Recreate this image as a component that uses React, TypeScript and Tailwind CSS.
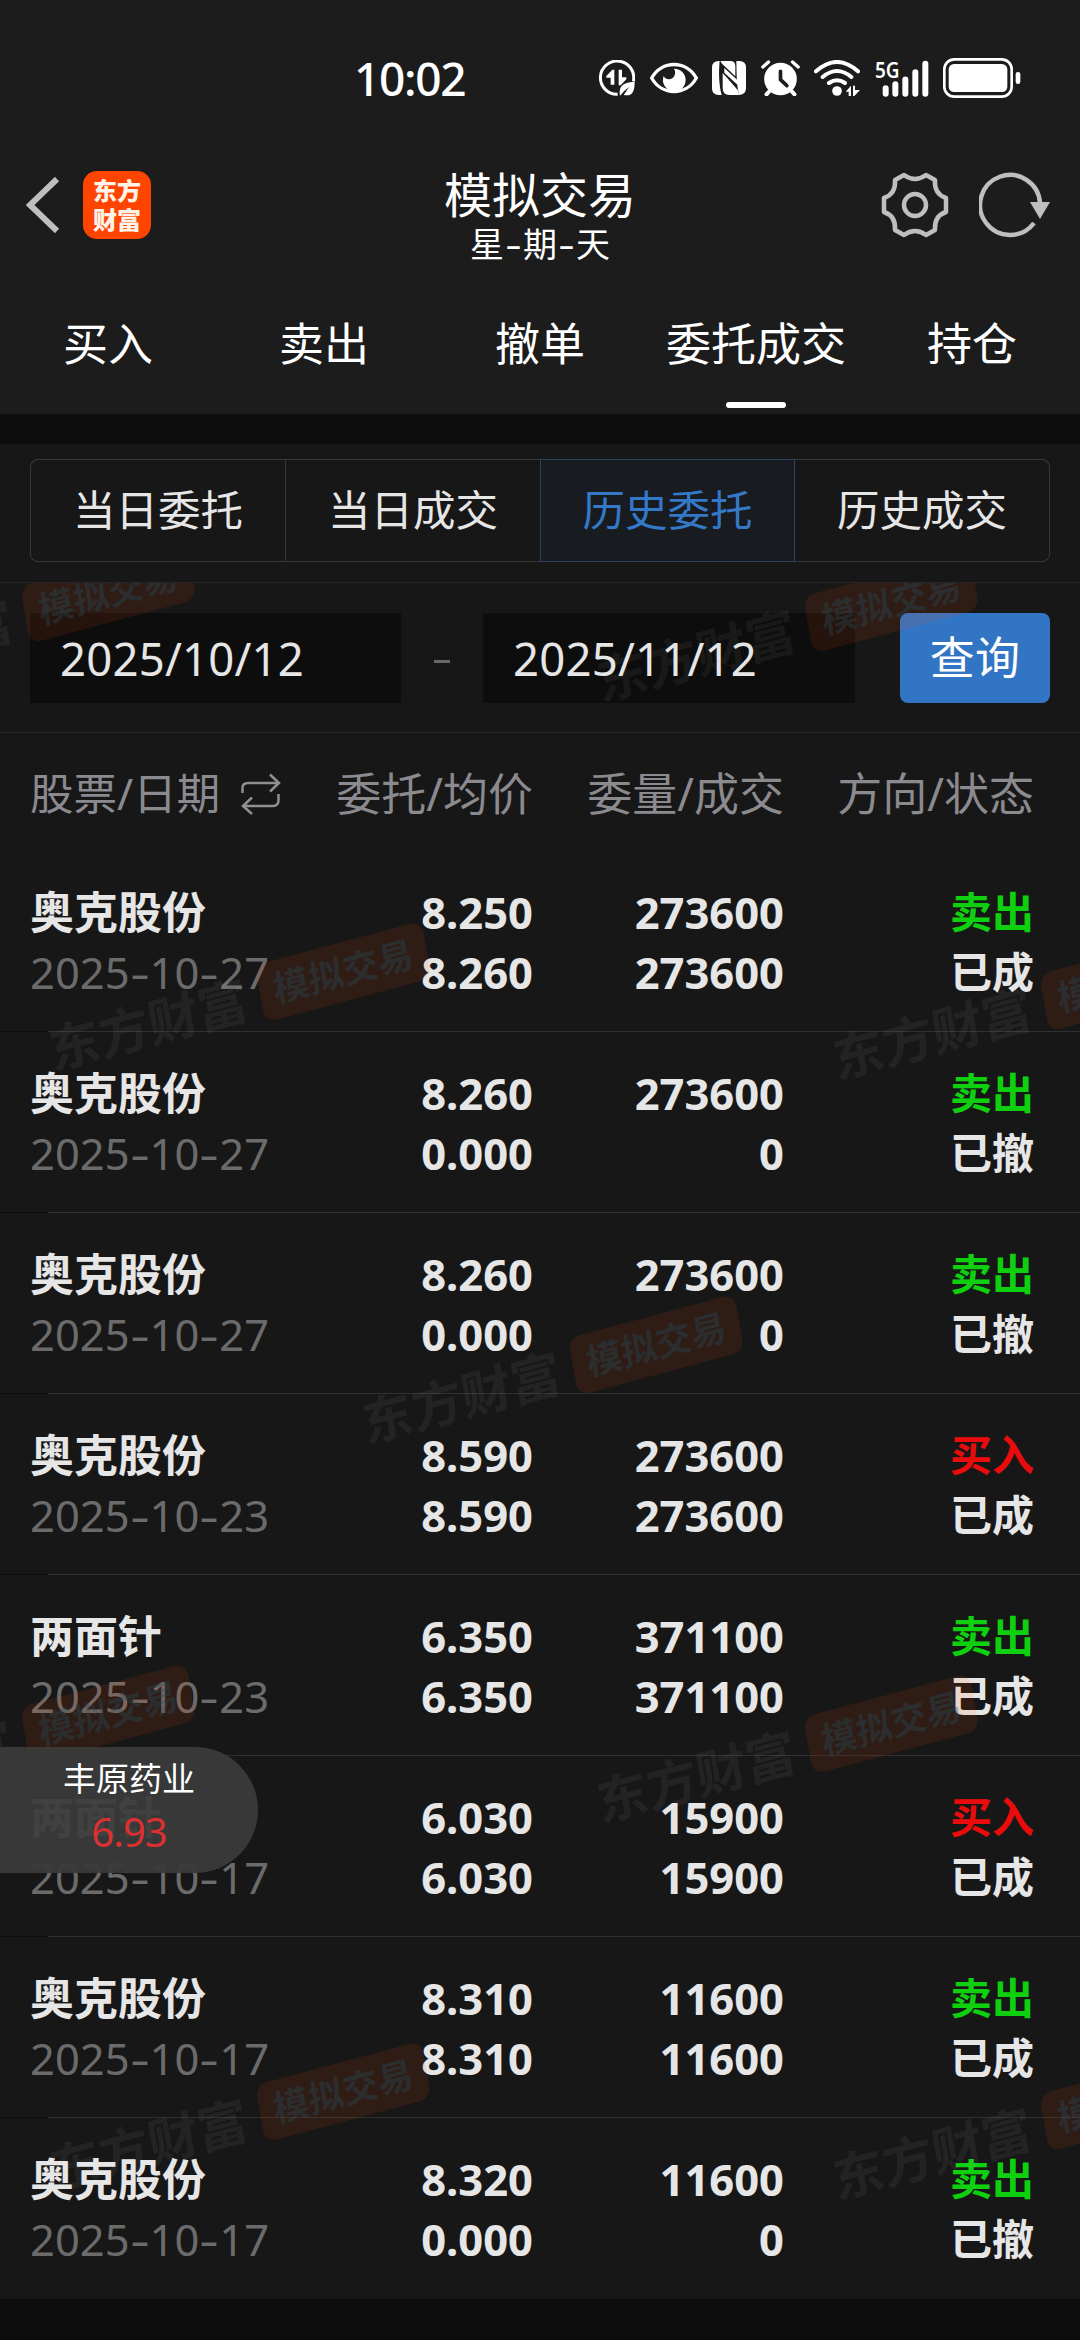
import { Fragment } from "react";
import clsx from "clsx";

type Order = {
    name: string;
    date: string;
    price: string;
    avgPrice: string;
    amount: string;
    filled: string;
    side: "买入" | "卖出";
    status: string;
};

const tabs = ["买入", "卖出", "撤单", "委托成交", "持仓"];
const segments = ["当日委托", "当日成交", "历史委托", "历史成交"];

const orders: Order[] = [
    { name: "奥克股份", date: "2025-10-27", price: "8.250", avgPrice: "8.260", amount: "273600", filled: "273600", side: "卖出", status: "已成" },
    { name: "奥克股份", date: "2025-10-27", price: "8.260", avgPrice: "0.000", amount: "273600", filled: "0", side: "卖出", status: "已撤" },
    { name: "奥克股份", date: "2025-10-27", price: "8.260", avgPrice: "0.000", amount: "273600", filled: "0", side: "卖出", status: "已撤" },
    { name: "奥克股份", date: "2025-10-23", price: "8.590", avgPrice: "8.590", amount: "273600", filled: "273600", side: "买入", status: "已成" },
    { name: "两面针", date: "2025-10-23", price: "6.350", avgPrice: "6.350", amount: "371100", filled: "371100", side: "卖出", status: "已成" },
    { name: "两面针", date: "2025-10-17", price: "6.030", avgPrice: "6.030", amount: "15900", filled: "15900", side: "买入", status: "已成" },
    { name: "奥克股份", date: "2025-10-17", price: "8.310", avgPrice: "8.310", amount: "11600", filled: "11600", side: "卖出", status: "已成" },
    { name: "奥克股份", date: "2025-10-17", price: "8.320", avgPrice: "0.000", amount: "11600", filled: "0", side: "卖出", status: "已撤" },
];

// centres of the watermark stamps, relative to the content area
const stamps = [
    "left-[3px] top-[38px]",
    "left-[786px] top-[48px]",
    "left-[238px] top-[417px]",
    "left-[1022px] top-[426px]",
    "left-[551px] top-[790px]",
    "left-[3px] top-[1159px]",
    "left-[786px] top-[1169px]",
    "left-[238px] top-[1537px]",
    "left-[1022px] top-[1546px]",
];

const StatusBar = () => (
    <div className="flex h-[156px] items-center justify-between pl-[354px] pr-[59px]">
        <span className="text-[46px] font-medium leading-none tracking-[-1.3px]">10:02</span>
        <div className="flex items-center gap-[14.5px]">
            <svg className="h-9 w-[37px]" viewBox="57 60 111 108" fill="none">
                <path d="M163 124A50 50 0 1 0 116 163" stroke="#fff" strokeWidth="9" />
                <path d="M106 134V89h-6L82 108v5h13v21zM119 89h10v23h13v6l-17 18h-6z" fill="#fff" />
                <path d="M167 125c-20 1-38 6-43 20-3 9-2 14-1 22l12-13 15-13-10 16-6 8c26 5 33-10 33-40z" fill="#fff" />
            </svg>
            <svg className="h-8 w-12" viewBox="211 66 144 96" fill="none">
                <path d="M216 114C246 60 320 60 350 114C320 168 246 168 216 114Z" stroke="#fff" strokeWidth="10" strokeLinejoin="round" />
                <path d="M283 86a34 34 0 1 1-31 22c4 8 12 11 20 9 14-4 18-20 11-31z" fill="#fff" />
            </svg>
            <svg className="size-[34px]" viewBox="399 63 102 102">
                <path d="M419 63h3c-3 30-3 70 6 102h-9q-20 0-20-20V83q0-20 20-20z" fill="#fff" />
                <path d="M424 63h28c14 0 17 6 17 18v28l-40-38zM481 165h-28c-17 0-22-8-22-24v-43l45 52z" fill="#fff" />
                <path d="M431 88l40 38v10l-40-37z" fill="#1c1c1c" />
                <path d="M472 63h9q20 0 20 20v62q0 18-20 20c-9-26-8-70-9-102z" fill="#fff" />
                <path d="M436 84l40 37v14l-40-37z" fill="#fff" />
            </svg>
            <svg className="h-9 w-[39px]" viewBox="543 60 116 108" fill="none" stroke="#fff" strokeLinecap="round">
                <circle cx="601" cy="117" r="49" fill="#fff" stroke="none" />
                <path d="M548 81l17-15M654 81l-17-15" strokeWidth="10" />
                <path d="M568 153l-9 10M634 153l9 10" strokeWidth="12" />
                <path d="M601 94v25l19 18" stroke="#1c1c1c" strokeWidth="11" strokeLinejoin="round" />
            </svg>
            <svg className="h-9 w-[46px]" viewBox="703 60 138 108" fill="none" stroke="#fff" strokeLinecap="round" strokeWidth="12">
                <path d="M709 94q63-56 126 0M729 111q43-36 86 0M748 129q24-17 48 0" />
                <circle cx="772" cy="153" r="14.500" fill="#fff" stroke="none" />
                <path d="M798 155l16-18v31h-7v-13zM820 137h6v13h15l-17 18h-4z" fill="#fff" stroke="none" />
            </svg>
            <svg className="h-[37px] w-[54px] overflow-visible" viewBox="886 58 162 110">
                <path d="M918 142v17M947 130v29M977 116v43M1007 94v65M1037 69v90" stroke="#fff" strokeWidth="18" strokeLinecap="round" />
                <text x="886" y="111" fill="#fff" fontFamily="Noto Sans" fontWeight="600" fontSize="66" textLength="74" lengthAdjust="spacingAndGlyphs">
                    5G
                </text>
            </svg>
            <svg className="h-10 w-[78px]" viewBox="1090 54 234 120" fill="none">
                <rect x="1094" y="58" width="202" height="112" rx="30" stroke="#fff" strokeWidth="8" />
                <rect x="1107" y="72" width="176" height="84" rx="16" fill="#fff" />
                <rect x="1308" y="96" width="14" height="36" rx="7" fill="#fff" />
            </svg>
        </div>
    </div>
);

const TitleBar = () => (
    <div className="grid h-[108px] grid-cols-[1fr_auto_1fr]">
        <div className="flex h-[98px] items-center pl-[26px]">
            <svg className="h-[56px] w-[34px]" viewBox="0 0 34 56" fill="none" stroke="#bfbfbf" strokeWidth="6">
                <path d="M31 2L4 28l27 26" />
            </svg>
            <div className="ml-[23px] flex h-[68px] w-[68px] flex-col items-center justify-center rounded-[14px] bg-[#ff4400] text-[24px] font-black leading-[29px] text-[#fff3ea]">
                <span>东方</span>
                <span>财富</span>
            </div>
        </div>
        <div className="flex flex-col items-center self-end">
            <h1 className="text-[48px] leading-[58px]">模拟交易</h1>
            <div className="flex text-[34px] leading-[40px]">
                星<span className="w-[19px] scale-x-150 text-center">-</span>期
                <span className="w-[19px] scale-x-150 text-center">-</span>天
            </div>
        </div>
        <div className="flex h-[98px] items-center justify-end gap-[30px] pr-[29px]">
            <svg className="h-[66px] w-[68px]" viewBox="-34 -33 68 66" fill="none" stroke="#bfbfbf" strokeWidth="4.500" strokeLinejoin="round">
                <path d="M-11-30Q0-22 11-30L20-25Q19-11 31-7V7Q19 11 20 25L11 30Q0 22-11 30L-20 25Q-19 11-31 7V-7Q-19-11-20-25Z" />
                <circle r="11" />
            </svg>
            <svg className="h-[66px] w-[72px]" viewBox="-31 -33 72 66" fill="none">
                <path d="M24 18A30 30 0 1 1 30-2" stroke="#bfbfbf" strokeWidth="4.500" />
                <path d="M20-3H40L30 14Z" fill="#bfbfbf" />
            </svg>
        </div>
    </div>
);

const Stamp = ({ position }: { position: string }) => (
    <div
        className={clsx(
            "absolute flex -translate-x-1/2 -translate-y-1/2 -rotate-15 -skew-x-5 items-center gap-[14px] whitespace-nowrap font-bold",
            position,
        )}
    >
        <span className="text-[51px] leading-none text-white/5">东方财富</span>
        <span className="flex h-[58px] w-[172px] items-center justify-center rounded-[12px] bg-[#ff4400]/10 text-[36px] text-[#24505f]/35">
            模拟交易
        </span>
    </div>
);

// the dashes are wider than the font's own hyphen
const OrderDate = ({ date }: { date: string }) => (
    <p className="font-normal text-[#6b6b6b]">
        {date.split("-").map((part, i) => (
            <Fragment key={i}>
                {i > 0 && <span className="mx-[3px] inline-block scale-x-140">-</span>}
                {part}
            </Fragment>
        ))}
    </p>
);

const OrderRow = ({ order, last }: { order: Order; last: boolean }) => (
    <div>
        <div className="grid h-[180px] grid-cols-[503px_251px_250px] px-[30px] pt-[31px] text-[43.5px] font-bold leading-[60px]">
            <div className="flex justify-between">
                <div>
                    <p className="text-[44px]">{order.name}</p>
                    <OrderDate date={order.date} />
                </div>
                <div className="text-right">
                    <p>{order.price}</p>
                    <p>{order.avgPrice}</p>
                </div>
            </div>
            <div className="text-right">
                <p>{order.amount}</p>
                <p>{order.filled}</p>
            </div>
            <div className="text-right text-[42px]">
                <p className={order.side === "卖出" ? "text-[#0fd00f]" : "text-[#ea0c0c]"}>{order.side}</p>
                <p>{order.status}</p>
            </div>
        </div>
        <div className={clsx("h-px pl-12", !last && "bg-[#0d0d0d]")}>
            <div className={clsx("h-px", !last && "bg-[#303030]")} />
        </div>
    </div>
);

const App = () => {
    return (
        <div className="h-[2340px] w-[1080px] overflow-hidden bg-[#0d0d0d] font-['Noto_Sans','Noto_Sans_CJK_SC',sans-serif] text-[#e6e6e6]">
            <header className="h-[414px] bg-[#1c1c1c] text-white">
                <StatusBar />
                <TitleBar />
                <nav className="grid grid-cols-5 pt-[50px]">
                    {tabs.map((tab) => (
                        <div key={tab} className="flex flex-col items-center gap-[28px] text-[45px] leading-[60px]">
                            {tab}
                            {tab === "委托成交" && <span className="h-[6px] w-[60px] rounded-full bg-white" />}
                        </div>
                    ))}
                </nav>
            </header>

            <main className="mt-[30px] bg-[#171717]">
                <div className="border-b border-[#262626] px-[30px] pb-5 pt-[15px]">
                    <div className="grid h-[103px] grid-cols-4">
                        {segments.map((segment) => (
                            <button
                                key={segment}
                                className={clsx(
                                    "border-y border-l pb-0.5 text-[42.5px] first:rounded-l-lg last:rounded-r-lg last:border-r",
                                    segment === "历史委托"
                                        ? "border-r border-[#2b4560] bg-[#181b20] text-[#3478c8]"
                                        : "border-[#383838] last:border-l-0",
                                )}
                            >
                                {segment}
                            </button>
                        ))}
                    </div>
                </div>

                <div className="relative">
                    <div className="flex items-center border-b border-[#262626] px-[30px] pb-[29px] pt-[30px] text-[45.5px] tracking-[0.2px]">
                        <div className="flex h-[90px] w-[371px] items-center bg-[#0d0d0d] pl-[30px]">2025/10/12</div>
                        <span className="flex w-[82px] justify-center">
                            <span className="mt-[6px] h-[3px] w-4 bg-[#686868]" />
                        </span>
                        <div className="flex h-[90px] w-[372px] items-center bg-[#0d0d0d] pl-[30px]">2025/11/12</div>
                        <button className="ml-auto h-[90px] w-[150px] rounded-lg bg-[#3275c4] text-[45px] text-white">查询</button>
                    </div>

                    <div className="grid h-[118px] grid-cols-[503px_251px_250px] items-center px-[30px] pt-1 text-[45px] text-[#8b8a8f]">
                        <div className="flex items-center justify-between">
                            <span className="flex items-center gap-[21px] text-[43.5px]">
                                股票/日期
                                <svg className="h-[42px] w-10" viewBox="0 0 40 42" fill="none" stroke="#8f8f8f" strokeWidth="2.500">
                                    <path d="M1.500 20V15Q1.500 10 7 10H38M29 1.500L38 10L29 18.500" />
                                    <path d="M37.500 21v6Q37.500 33 32 33H2M11 24.500L2 33L11 41" />
                                </svg>
                            </span>
                            <span>委托/均价</span>
                        </div>
                        <span className="text-right">委量/成交</span>
                        <span className="text-right">方向/状态</span>
                    </div>

                    {orders.map((order, i) => (
                        <OrderRow key={i} order={order} last={i === orders.length - 1} />
                    ))}

                    <div className="pointer-events-none absolute inset-0 overflow-hidden">
                        {stamps.map((position) => (
                            <Stamp key={position} position={position} />
                        ))}
                    </div>

                    <div className="absolute left-0 top-[1164px] flex h-[126px] w-[258px] flex-col items-center rounded-r-full bg-[#3a3a3a]/96 pt-[9px] text-white">
                        <span className="text-[33px] leading-[46px]">丰原药业</span>
                        <span className="text-[40px] leading-[60px] tracking-[-1px] text-[#dc3030]">6.93</span>
                    </div>
                </div>
            </main>
        </div>
    );
};

export default App;
